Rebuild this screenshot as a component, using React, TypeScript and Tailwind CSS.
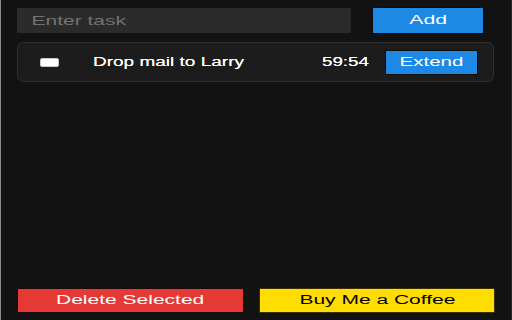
import React from "react";

export default function App() {
  return (
    <div
      className="w-[512px] h-[320px] bg-[#121212] border-l border-l-[#8a8a8a] border-r border-r-[#2a2a2a] flex flex-col pl-[16px] pr-[15px] pt-[7px] pb-[7px] overflow-hidden"
      style={{ fontFamily: '"Liberation Sans", Arial, sans-serif' }}
    >
      {/* input row */}
      <div className="flex items-center h-[27px]">
        <div className="w-[334px] h-[25px] overflow-visible">
          <input
            type="text"
            placeholder="Enter task"
            className="w-[207px] h-[25px] origin-left scale-x-[1.613] bg-[#2b2b2b] text-white text-[13px] pl-[9px] outline-none placeholder:text-[#737373]"
          />
        </div>
        <button className="ml-[21px] w-[112px] h-[27px] bg-[#1e88e5] border border-[#0b0b0b] text-white text-[12.5px] flex items-center justify-center">
          <span className="inline-block scale-x-[1.7]">Add</span>
        </button>
      </div>

      {/* task row */}
      <div className="mt-[8px] h-[40px] flex items-center rounded-[6px] bg-[#1c1c1c] border border-[#2e2e2e] w-[477px]">
        <input
          type="checkbox"
          className="appearance-none ml-[22px] w-[19px] h-[9px] bg-white rounded-[2px] border border-[#c8c8c8] shrink-0"
        />
        <div className="ml-[34px] flex-1 text-white text-[12.5px]">
          <span className="inline-block origin-left scale-x-[1.52] [text-shadow:0_0_0.4px_#fff]">Drop mail to Larry</span>
        </div>
        <div className="w-[47px] text-white text-[12.5px]">
          <span className="inline-block origin-left scale-x-[1.5] [text-shadow:0_0_0.4px_#fff]">59:54</span>
        </div>
        <button className="ml-[16px] mr-[15px] w-[93px] h-[25px] bg-[#1e88e5] border border-[#0b0b0b] text-white text-[12.5px] flex items-center justify-center">
          <span className="inline-block scale-x-[1.64]">Extend</span>
        </button>
      </div>

      {/* bottom buttons */}
      <div className="mt-auto flex gap-[15px] h-[25px]">
        <button className="w-[227px] h-[25px] bg-[#e53935] border border-[#1a0a0a] text-white text-[12.5px] flex items-center justify-center">
          <span className="inline-block scale-x-[1.68]">Delete Selected</span>
        </button>
        <button className="w-[236px] h-[25px] bg-[#ffdd00] border border-[#3a3000] text-black text-[12.5px] flex items-center justify-center">
          <span className="inline-block scale-x-[1.68]">Buy Me a Coffee</span>
        </button>
      </div>
    </div>
  );
}
